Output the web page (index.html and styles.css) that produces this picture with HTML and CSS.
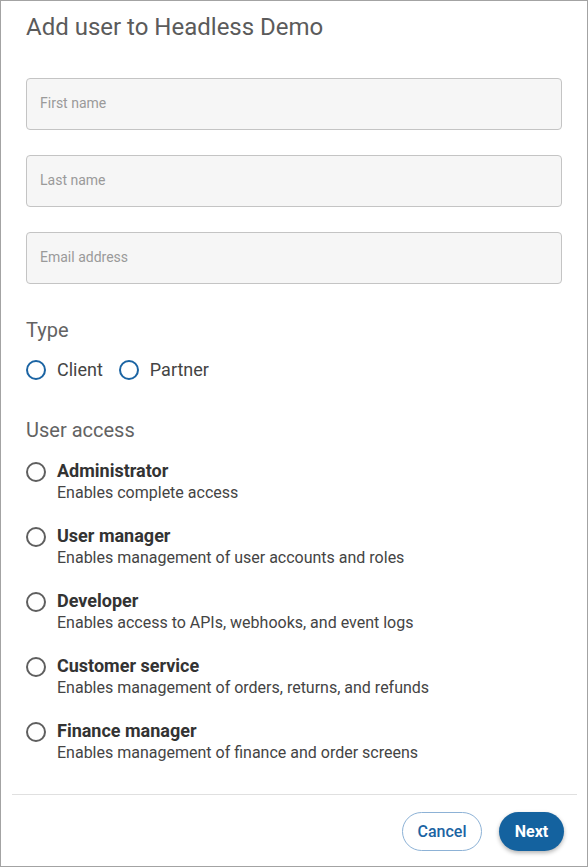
FILE: index.html
```html
<!DOCTYPE html>
<html lang="en">
<head>
<meta charset="utf-8">
<title>Add user</title>
<link rel="stylesheet" href="styles.css">
</head>
<body>
<div class="dialog">
  <h1 class="title">Add user to Headless Demo</h1>
  <div class="fields">
    <input class="field" type="text" placeholder="First name">
    <input class="field" type="text" placeholder="Last name">
    <input class="field" type="text" placeholder="Email address">
  </div>
  <div class="section-label type-label">Type</div>
  <div class="type-row">
    <label class="type-opt"><span class="radio radio-blue"></span><span class="type-text">Client</span></label>
    <label class="type-opt"><span class="radio radio-blue"></span><span class="type-text">Partner</span></label>
  </div>
  <div class="section-label access-label">User access</div>
  <div class="access-list">
    <div class="access-item"><span class="radio radio-gray"></span><div class="access-text"><div class="access-title">Administrator</div><div class="access-desc">Enables complete access</div></div></div>
    <div class="access-item"><span class="radio radio-gray"></span><div class="access-text"><div class="access-title">User manager</div><div class="access-desc">Enables management of user accounts and roles</div></div></div>
    <div class="access-item"><span class="radio radio-gray"></span><div class="access-text"><div class="access-title">Developer</div><div class="access-desc">Enables access to APIs, webhooks, and event logs</div></div></div>
    <div class="access-item"><span class="radio radio-gray"></span><div class="access-text"><div class="access-title">Customer service</div><div class="access-desc">Enables management of orders, returns, and refunds</div></div></div>
    <div class="access-item"><span class="radio radio-gray"></span><div class="access-text"><div class="access-title">Finance manager</div><div class="access-desc">Enables management of finance and order screens</div></div></div>
  </div>
  <div class="footer">
    <button class="btn btn-cancel" type="button">Cancel</button>
    <button class="btn btn-next" type="button">Next</button>
  </div>
</div>
</body>
</html>
```
FILE: styles.css
```css
html, body {
  margin: 0;
  padding: 0;
  background: #ffffff;
}
body {
  font-family: Roboto, "Liberation Sans", sans-serif;
}
.dialog {
  width: 588px;
  height: 867px;
  box-sizing: border-box;
  border: 1px solid #a3a3a3;
  padding: 12px 25px 0;
  display: flex;
  flex-direction: column;
}
.title {
  margin: 0;
  font-size: 24px;
  line-height: 28px;
  font-weight: 400;
  color: #5b5b5b;
}
.fields {
  margin-top: 37px;
  display: flex;
  flex-direction: column;
  gap: 25px;
}
.field {
  display: block;
  width: 100%;
  height: 52px;
  box-sizing: border-box;
  border: 1px solid #c4c4c4;
  border-radius: 4px;
  background: #f6f6f6;
  padding: 0 13px 2px;
  font-family: Roboto, "Liberation Sans", sans-serif;
  font-size: 14px;
  color: #333;
  outline: none;
}
.field::placeholder {
  color: #9a9a9a;
}
.section-label {
  font-size: 20px;
  line-height: 24px;
  color: #636363;
}
.type-label {
  margin-top: 34px;
}
.type-row {
  margin-top: 16px;
  display: flex;
  gap: 16px;
  height: 24px;
  align-items: center;
}
.type-opt {
  display: flex;
  align-items: center;
  gap: 11px;
}
.type-text {
  font-size: 18px;
  line-height: 22px;
  color: #444;
}
.radio {
  width: 20px;
  height: 20px;
  box-sizing: border-box;
  border-radius: 50%;
  flex: none;
  background: #fff;
}
.radio-blue {
  border: 2px solid #1b64a3;
}
.radio-gray {
  border: 2px solid #5f5f5f;
}
.access-label {
  margin-top: 36px;
}
.access-list {
  margin-top: 18px;
  display: flex;
  flex-direction: column;
  gap: 22px;
}
.access-item {
  display: flex;
  gap: 11px;
  align-items: flex-start;
}
.access-item .radio {
  margin-top: 2px;
}
.access-title {
  font-size: 18px;
  line-height: 22px;
  font-weight: 700;
  color: #333;
}
.access-desc {
  padding-top: 1px;
  font-size: 16px;
  line-height: 20px;
  color: #444;
}
.footer {
  margin: auto -15px 0 -14px;
  border-top: 1px solid #e0e0e0;
  padding: 17px 13px 15px 0;
  display: flex;
  justify-content: flex-end;
  gap: 17px;
}
.btn {
  height: 39px;
  border-radius: 20px;
  font-family: Roboto, "Liberation Sans", sans-serif;
  font-size: 16px;
  box-sizing: border-box;
  cursor: pointer;
}
.btn-cancel {
  width: 80px;
  background: #fff;
  border: 1px solid #8db2d6;
  color: #1b64a3;
  font-weight: 500;
}
.btn-next {
  width: 65px;
  background: #14629f;
  border: none;
  color: #fff;
  font-weight: 700;
  box-shadow: 0 2px 4px rgba(0, 0, 0, 0.3);
}
```
